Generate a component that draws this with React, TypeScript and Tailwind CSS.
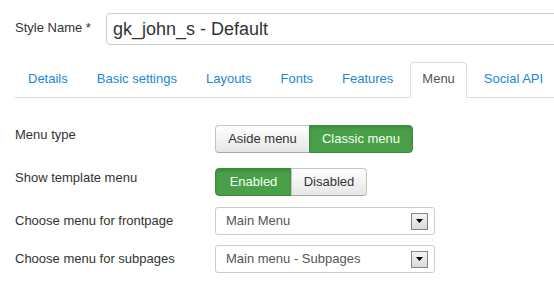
import React from "react";

const tabs = ["Details", "Basic settings", "Layouts", "Fonts", "Features", "Menu", "Social API"];

function Btn({ label, active, pos }: { label: string; active: boolean; pos: "l" | "r" }) {
  const round = pos === "l" ? "rounded-l-[4px]" : "rounded-r-[4px]";
  const base = "h-[28px] flex items-center justify-center text-[13px] border whitespace-nowrap";
  if (active) {
    return (
      <div
        className={`${base} ${round} bg-[#49a049] border-[#3e8a3e] text-[#f4fff4] shadow-[inset_0_2px_3px_rgba(0,0,0,0.15)]`}
      >
        {label}
      </div>
    );
  }
  return (
    <div
      className={`${base} ${round} bg-gradient-to-b from-[#ffffff] to-[#e6e6e6] border-[#c4c4c4] border-b-[#a8a8a8] text-[#333]`}
    >
      {label}
    </div>
  );
}

function Select({ value }: { value: string }) {
  return (
    <div className="w-[220px] shrink-0 h-[28px] border border-[#cccccc] rounded-[3px] flex items-center pl-[10px] pr-[6px] justify-between text-[13px] text-[#555]">
      <span className="whitespace-nowrap">{value}</span>
      <div className="w-[17px] h-[17px] border border-[#858585] bg-gradient-to-b from-[#f4f4f4] to-[#dadada] flex items-center justify-center">
        <svg width="7" height="4" viewBox="0 0 7 4">
          <polygon points="0,0 7,0 3.5,4" fill="#000" />
        </svg>
      </div>
    </div>
  );
}

export default function App() {
  return (
    <div
      className="w-[554px] h-[281px] bg-white overflow-hidden text-[#333] text-[13px]"
      style={{ fontFamily: '"Liberation Sans", Arial, sans-serif' }}
    >
      <div className="flex items-center pt-[13px] pl-[15px]">
        <div className="w-[91px] shrink-0 whitespace-nowrap text-[13px] -mt-[3px]">Style Name *</div>
        <div className="w-[470px] shrink-0 h-[32px] border border-[#cccccc] rounded-[4px] flex items-center pl-[6px] text-[18px] text-[#333] whitespace-nowrap">
          gk_john_s - Default
        </div>
      </div>

      <div className="ml-[15px] mt-[17px] flex border-b border-[#dddddd] pl-[1px]">
        {tabs.map((t) => {
          const active = t === "Menu";
          return (
            <div
              key={t}
              className={
                active
                  ? "h-[36px] shrink-0 whitespace-nowrap -mb-[1px] px-[11px] mr-[5px] flex items-center border border-[#dddddd] border-b-white rounded-t-[4px] bg-white text-[#555] pb-[2px]"
                  : "h-[36px] shrink-0 whitespace-nowrap -mb-[1px] px-[11px] mr-[5px] flex items-center border border-transparent text-[#2088d4] pb-[2px]"
              }
            >
              {t}
            </div>
          );
        })}
      </div>

      <div className="pl-[15px] mt-[27px] flex flex-col">
        <div className="flex items-start h-[28px]">
          <div className="w-[200px] shrink-0 leading-[18px] pt-[1px]">Menu type</div>
          <div className="flex">
            <div className="w-[95px]"><Btn label="Aside menu" active={false} pos="l" /></div>
            <div className="w-[104px] -ml-[1px]"><Btn label="Classic menu" active pos="r" /></div>
          </div>
        </div>
        <div className="flex items-start h-[28px] mt-[15px]">
          <div className="w-[200px] shrink-0 leading-[18px] pt-[1px]">Show template menu</div>
          <div className="flex">
            <div className="w-[77px]"><Btn label="Enabled" active pos="l" /></div>
            <div className="w-[76px] -ml-[1px]"><Btn label="Disabled" active={false} pos="r" /></div>
          </div>
        </div>
        <div className="flex items-center mt-[11px]">
          <div className="w-[200px] shrink-0">Choose menu for frontpage</div>
          <Select value="Main Menu" />
        </div>
        <div className="flex items-center mt-[10px]">
          <div className="w-[200px] shrink-0">Choose menu for subpages</div>
          <Select value="Main menu - Subpages" />
        </div>
      </div>
    </div>
  );
}
